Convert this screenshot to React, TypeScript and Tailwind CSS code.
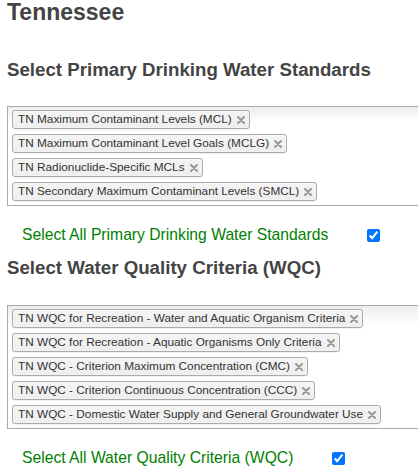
import React from 'react';

const primaryStandards = [
  'TN Maximum Contaminant Levels (MCL)',
  'TN Maximum Contaminant Level Goals (MCLG)',
  'TN Radionuclide-Specific MCLs',
  'TN Secondary Maximum Contaminant Levels (SMCL)',
];

const waterCriteria = [
  'TN WQC for Recreation - Water and Aquatic Organism Criteria',
  'TN WQC for Recreation - Aquatic Organisms Only Criteria',
  'TN WQC - Criterion Maximum Concentration (CMC)',
  'TN WQC - Criterion Continuous Concentration (CCC)',
  'TN WQC - Domestic Water Supply and General Groundwater Use',
];

const Chip: React.FC<{ label: string }> = ({ label }) => (
  <div className="flex h-[19px] items-center rounded-[3px] border border-[#aaa] bg-gradient-to-b from-[#f4f4f4] to-[#eee] pl-[5px] pr-[4px] text-[11.8px] leading-[13px] text-[#333] shadow-[inset_0_0_2px_#fff,0_1px_0_rgba(0,0,0,0.05)]">
    <span>{label}</span>
    <svg className="ml-[5px]" width="8" height="8" viewBox="0 0 8 8">
      <path d="M1 1 L7 7 M7 1 L1 7" stroke="#999" strokeWidth="2" strokeLinecap="round" />
    </svg>
  </div>
);

const ChoiceBox: React.FC<{ items: string[] }> = ({ items }) => (
  <div className="w-[440px] border border-[#aaa] bg-[linear-gradient(#eee_1%,#fff_15%)] pt-[3px] pb-[4px] pl-[4px]">
    <div className="flex flex-col items-start gap-[5px]">
      {items.map((item) => (
        <Chip key={item} label={item} />
      ))}
    </div>
  </div>
);

const SelectAll: React.FC<{ label: string }> = ({ label }) => (
  <div className="flex h-[20px] items-center pl-[15px]">
    <span className="text-[15.7px] leading-[20px] text-[#008000]">{label}</span>
    <input type="checkbox" defaultChecked className="ml-[39px] h-[13px] w-[13px]" />
  </div>
);

export default function App() {
  return (
    <div className="h-[468px] w-[418px] overflow-hidden bg-white pl-[7px] pt-[1px] font-['Liberation_Sans',Arial,sans-serif]">
      {/* State */}
      <h1 className="text-[23px] font-bold leading-[22px] text-[#444]">Tennessee</h1>

      {/* Primary drinking water */}
      <h2 className="mt-[36px] text-[18.7px] font-bold leading-[22px] text-[#444]">
        Select Primary Drinking Water Standards
      </h2>
      <div className="mt-[25px]">
        <ChoiceBox items={primaryStandards} />
      </div>
      <div className="mt-[19px]">
        <SelectAll label="Select All Primary Drinking Water Standards" />
      </div>

      {/* Water quality criteria */}
      <h2 className="mt-[12px] text-[18.7px] font-bold leading-[22px] text-[#444]">
        Select Water Quality Criteria (WQC)
      </h2>
      <div className="mt-[26px]">
        <ChoiceBox items={waterCriteria} />
      </div>
      <div className="mt-[19px]">
        <SelectAll label="Select All Water Quality Criteria (WQC)" />
      </div>
    </div>
  );
}
